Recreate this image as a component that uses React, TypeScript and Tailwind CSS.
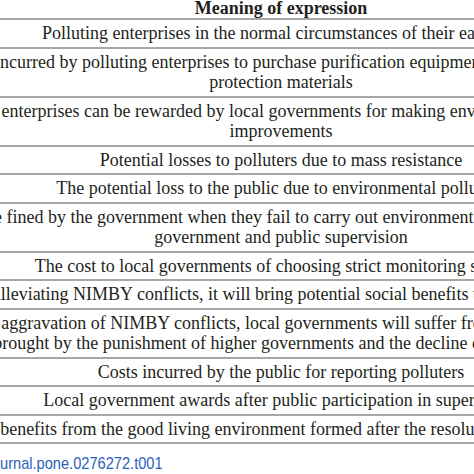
const ROWS: string[][] = [
  ['Polluting enterprises in the normal circumstances of their earnings'],
  [
    'Costs incurred by polluting enterprises to purchase purification equipment and environment',
    'protection materials',
  ],
  [
    'Polluting enterprises can be rewarded by local governments for making environmental protection',
    'improvements',
  ],
  ['Potential losses to polluters due to mass resistance'],
  ['The potential loss to the public due to environmental pollution'],
  [
    'will be fined by the government when they fail to carry out environmental protection under',
    'government and public supervision',
  ],
  ['The cost to local governments of choosing strict monitoring strategy'],
  ['By alleviating NIMBY conflicts, it will bring potential social benefits to local residents'],
  [
    'the aggravation of NIMBY conflicts, local governments will suffer from the losses at',
    'brought by the punishment of higher governments and the decline of credibility.',
  ],
  ['Costs incurred by the public for reporting polluters'],
  ['Local government awards after public participation in supervision'],
  ['Public benefits from the good living environment formed after the resolution of NIMBY ills'],
]

export default function App() {
  return (
    <div className="w-[474px] h-[474px] overflow-hidden bg-white text-[#231f20]">
      <div className="-ml-[69px] -mt-[5.5px] w-[700px] font-['Liberation_Serif',serif] text-[18px] leading-[20.5px]">
        {/* Header */}
        <div className="pt-[3px] text-center font-bold whitespace-nowrap border-b-2 border-[#a7a7a7]">
          Meaning of expression
        </div>

        {ROWS.map((lines, i) => (
          <div key={i} className="py-[3px] text-center whitespace-nowrap border-b-2 border-[#a7a7a7]">
            {lines.map((line, j) => (
              <div key={j}>{line}</div>
            ))}
          </div>
        ))}
      </div>

      <div className="mt-[10px] origin-left scale-x-[0.86] whitespace-nowrap font-['Liberation_Sans',sans-serif] text-[17px] leading-[20px] text-[#2d62b8]">
        urnal.pone.0276272.t001
      </div>
    </div>
  )
}
